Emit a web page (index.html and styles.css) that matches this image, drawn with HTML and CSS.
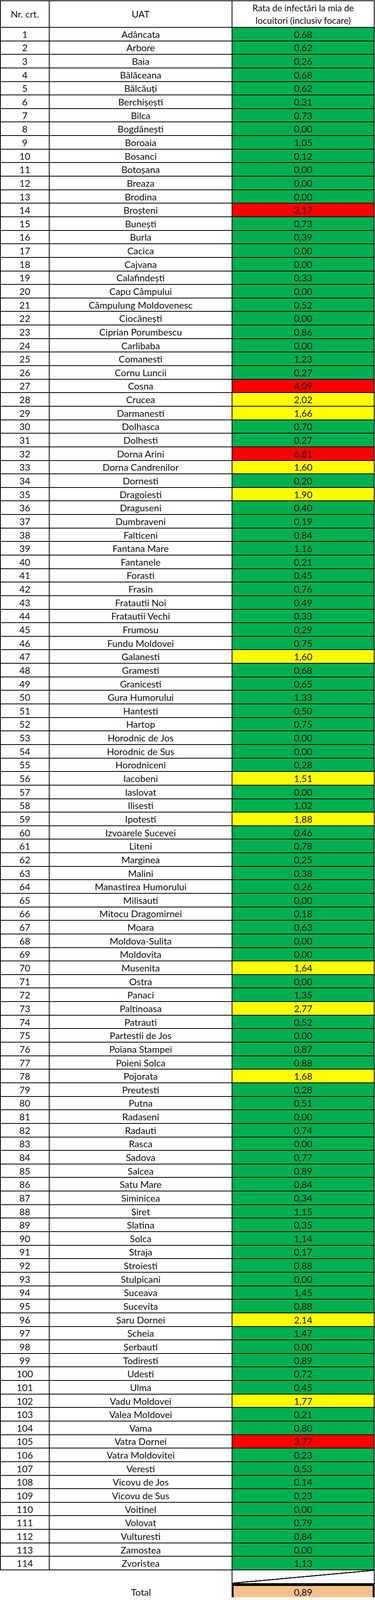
FILE: index.html
```html
<!DOCTYPE html>
<html lang="ro">
<head>
<meta charset="utf-8">
<title>Rata de infectări</title>
<link rel="stylesheet" href="styles.css">
</head>
<body>
<div class="sheet">
<div class="c n hd">Nr. crt.</div><div class="c hd">UAT</div><div class="c hd two">Rata de infectări la mia de<br>locuitori (inclusiv focare)</div>
<div class="c n">1</div><div class="c">Adâncata</div><div class="c g">0,68</div>
<div class="c n">2</div><div class="c">Arbore</div><div class="c g">0,62</div>
<div class="c n">3</div><div class="c">Baia</div><div class="c g">0,26</div>
<div class="c n">4</div><div class="c">Bălăceana</div><div class="c g">0,68</div>
<div class="c n">5</div><div class="c">Bălcăuți</div><div class="c g">0,62</div>
<div class="c n">6</div><div class="c">Berchișești</div><div class="c g">0,31</div>
<div class="c n">7</div><div class="c">Bilca</div><div class="c g">0,73</div>
<div class="c n">8</div><div class="c">Bogdănești</div><div class="c g">0,00</div>
<div class="c n">9</div><div class="c">Boroaia</div><div class="c g">1,05</div>
<div class="c n">10</div><div class="c">Bosanci</div><div class="c g">0,12</div>
<div class="c n">11</div><div class="c">Botoșana</div><div class="c g">0,00</div>
<div class="c n">12</div><div class="c">Breaza</div><div class="c g">0,00</div>
<div class="c n">13</div><div class="c">Brodina</div><div class="c g">0,00</div>
<div class="c n">14</div><div class="c">Broșteni</div><div class="c r">3,17</div>
<div class="c n">15</div><div class="c">Bunești</div><div class="c g">0,73</div>
<div class="c n">16</div><div class="c">Burla</div><div class="c g">0,39</div>
<div class="c n">17</div><div class="c">Cacica</div><div class="c g">0,00</div>
<div class="c n">18</div><div class="c">Cajvana</div><div class="c g">0,00</div>
<div class="c n">19</div><div class="c">Calafindești</div><div class="c g">0,33</div>
<div class="c n">20</div><div class="c">Capu Câmpului</div><div class="c g">0,00</div>
<div class="c n">21</div><div class="c">Câmpulung Moldovenesc</div><div class="c g">0,52</div>
<div class="c n">22</div><div class="c">Ciocănești</div><div class="c g">0,00</div>
<div class="c n">23</div><div class="c">Ciprian Porumbescu</div><div class="c g">0,86</div>
<div class="c n">24</div><div class="c">Carlibaba</div><div class="c g">0,00</div>
<div class="c n">25</div><div class="c">Comanesti</div><div class="c g">1,23</div>
<div class="c n">26</div><div class="c">Cornu Luncii</div><div class="c g">0,27</div>
<div class="c n">27</div><div class="c">Cosna</div><div class="c r">4,09</div>
<div class="c n">28</div><div class="c">Crucea</div><div class="c y">2,02</div>
<div class="c n">29</div><div class="c">Darmanesti</div><div class="c y">1,66</div>
<div class="c n">30</div><div class="c">Dolhasca</div><div class="c g">0,70</div>
<div class="c n">31</div><div class="c">Dolhesti</div><div class="c g">0,27</div>
<div class="c n">32</div><div class="c">Dorna Arini</div><div class="c r">6,81</div>
<div class="c n">33</div><div class="c">Dorna Candrenilor</div><div class="c y">1,60</div>
<div class="c n">34</div><div class="c">Dornesti</div><div class="c g">0,20</div>
<div class="c n">35</div><div class="c">Dragoiesti</div><div class="c y">1,90</div>
<div class="c n">36</div><div class="c">Draguseni</div><div class="c g">0,40</div>
<div class="c n">37</div><div class="c">Dumbraveni</div><div class="c g">0,19</div>
<div class="c n">38</div><div class="c">Falticeni</div><div class="c g">0,84</div>
<div class="c n">39</div><div class="c">Fantana Mare</div><div class="c g">1,16</div>
<div class="c n">40</div><div class="c">Fantanele</div><div class="c g">0,21</div>
<div class="c n">41</div><div class="c">Forasti</div><div class="c g">0,45</div>
<div class="c n">42</div><div class="c">Frasin</div><div class="c g">0,76</div>
<div class="c n">43</div><div class="c">Fratautii Noi</div><div class="c g">0,49</div>
<div class="c n">44</div><div class="c">Fratautii Vechi</div><div class="c g">0,33</div>
<div class="c n">45</div><div class="c">Frumosu</div><div class="c g">0,29</div>
<div class="c n">46</div><div class="c">Fundu Moldovei</div><div class="c g">0,75</div>
<div class="c n">47</div><div class="c">Galanesti</div><div class="c y">1,60</div>
<div class="c n">48</div><div class="c">Gramesti</div><div class="c g">0,68</div>
<div class="c n">49</div><div class="c">Granicesti</div><div class="c g">0,65</div>
<div class="c n">50</div><div class="c">Gura Humorului</div><div class="c g">1,33</div>
<div class="c n">51</div><div class="c">Hantesti</div><div class="c g">0,50</div>
<div class="c n">52</div><div class="c">Hartop</div><div class="c g">0,75</div>
<div class="c n">53</div><div class="c">Horodnic de Jos</div><div class="c g">0,00</div>
<div class="c n">54</div><div class="c">Horodnic de Sus</div><div class="c g">0,00</div>
<div class="c n">55</div><div class="c">Horodniceni</div><div class="c g">0,28</div>
<div class="c n">56</div><div class="c">Iacobeni</div><div class="c y">1,51</div>
<div class="c n">57</div><div class="c">Iaslovat</div><div class="c g">0,00</div>
<div class="c n">58</div><div class="c">Ilisesti</div><div class="c g">1,02</div>
<div class="c n">59</div><div class="c">Ipotesti</div><div class="c y">1,88</div>
<div class="c n">60</div><div class="c">Izvoarele Sucevei</div><div class="c g">0,46</div>
<div class="c n">61</div><div class="c">Liteni</div><div class="c g">0,78</div>
<div class="c n">62</div><div class="c">Marginea</div><div class="c g">0,25</div>
<div class="c n">63</div><div class="c">Malini</div><div class="c g">0,38</div>
<div class="c n">64</div><div class="c">Manastirea Humorului</div><div class="c g">0,26</div>
<div class="c n">65</div><div class="c">Milisauti</div><div class="c g">0,00</div>
<div class="c n">66</div><div class="c">Mitocu Dragomirnei</div><div class="c g">0,18</div>
<div class="c n">67</div><div class="c">Moara</div><div class="c g">0,63</div>
<div class="c n">68</div><div class="c">Moldova-Sulita</div><div class="c g">0,00</div>
<div class="c n">69</div><div class="c">Moldovita</div><div class="c g">0,00</div>
<div class="c n">70</div><div class="c">Musenita</div><div class="c y">1,64</div>
<div class="c n">71</div><div class="c">Ostra</div><div class="c g">0,00</div>
<div class="c n">72</div><div class="c">Panaci</div><div class="c g">1,35</div>
<div class="c n">73</div><div class="c">Paltinoasa</div><div class="c y">2,77</div>
<div class="c n">74</div><div class="c">Patrauti</div><div class="c g">0,52</div>
<div class="c n">75</div><div class="c">Partestii de Jos</div><div class="c g">0,00</div>
<div class="c n">76</div><div class="c">Poiana Stampei</div><div class="c g">0,87</div>
<div class="c n">77</div><div class="c">Poieni Solca</div><div class="c g">0,88</div>
<div class="c n">78</div><div class="c">Pojorata</div><div class="c y">1,68</div>
<div class="c n">79</div><div class="c">Preutesti</div><div class="c g">0,28</div>
<div class="c n">80</div><div class="c">Putna</div><div class="c g">0,51</div>
<div class="c n">81</div><div class="c">Radaseni</div><div class="c g">0,00</div>
<div class="c n">82</div><div class="c">Radauti</div><div class="c g">0,74</div>
<div class="c n">83</div><div class="c">Rasca</div><div class="c g">0,00</div>
<div class="c n">84</div><div class="c">Sadova</div><div class="c g">0,77</div>
<div class="c n">85</div><div class="c">Salcea</div><div class="c g">0,89</div>
<div class="c n">86</div><div class="c">Satu Mare</div><div class="c g">0,84</div>
<div class="c n">87</div><div class="c">Siminicea</div><div class="c g">0,34</div>
<div class="c n">88</div><div class="c">Siret</div><div class="c g">1,15</div>
<div class="c n">89</div><div class="c">Slatina</div><div class="c g">0,35</div>
<div class="c n">90</div><div class="c">Solca</div><div class="c g">1,14</div>
<div class="c n">91</div><div class="c">Straja</div><div class="c g">0,17</div>
<div class="c n">92</div><div class="c">Stroiesti</div><div class="c g">0,88</div>
<div class="c n">93</div><div class="c">Stulpicani</div><div class="c g">0,00</div>
<div class="c n">94</div><div class="c">Suceava</div><div class="c g">1,45</div>
<div class="c n">95</div><div class="c">Sucevita</div><div class="c g">0,88</div>
<div class="c n">96</div><div class="c">Șaru Dornei</div><div class="c y">2,14</div>
<div class="c n">97</div><div class="c">Șcheia</div><div class="c g">1,47</div>
<div class="c n">98</div><div class="c">Șerbauti</div><div class="c g">0,00</div>
<div class="c n">99</div><div class="c">Todiresti</div><div class="c g">0,89</div>
<div class="c n">100</div><div class="c">Udesti</div><div class="c g">0,72</div>
<div class="c n">101</div><div class="c">Ulma</div><div class="c g">0,45</div>
<div class="c n">102</div><div class="c">Vadu Moldovei</div><div class="c y">1,77</div>
<div class="c n">103</div><div class="c">Valea Moldovei</div><div class="c g">0,21</div>
<div class="c n">104</div><div class="c">Vama</div><div class="c g">0,80</div>
<div class="c n">105</div><div class="c">Vatra Dornei</div><div class="c r">3,77</div>
<div class="c n">106</div><div class="c">Vatra Moldovitei</div><div class="c g">0,23</div>
<div class="c n">107</div><div class="c">Veresti</div><div class="c g">0,53</div>
<div class="c n">108</div><div class="c">Vicovu de Jos</div><div class="c g">0,14</div>
<div class="c n">109</div><div class="c">Vicovu de Sus</div><div class="c g">0,23</div>
<div class="c n">110</div><div class="c">Voitinel</div><div class="c g">0,00</div>
<div class="c n">111</div><div class="c">Volovat</div><div class="c g">0,79</div>
<div class="c n">112</div><div class="c">Vulturesti</div><div class="c g">0,84</div>
<div class="c n">113</div><div class="c">Zamostea</div><div class="c g">0,00</div>
<div class="c n">114</div><div class="c">Zvoristea</div><div class="c g">1,13</div>
<div class="blank"></div><div class="blank edge"></div><div class="c diag"></div>
<div class="blank totrow"></div><div class="blank totrow label">Total</div><div class="sum totrow">0,89</div>
</div>
</body>
</html>
```
FILE: styles.css
```css
html, body {
  margin: 0;
  padding: 0;
  background: #ffffff;
}

body {
  padding-top: 1px;
  font-family: Lato, "Open Sans", "Liberation Sans", sans-serif;
  color: #111111;
}

.sheet {
  display: grid;
  grid-template-columns: 127px 468px 364px;
  grid-template-rows: 70px;
  grid-auto-rows: 34.644px;
  width: 959px;
  font-size: 24px;
  line-height: 26px;
}

.c {
  box-sizing: border-box;
  display: flex;
  align-items: center;
  justify-content: center;
  text-align: center;
  border-right: 2px solid #000000;
  border-bottom: 2px solid #000000;
  padding-top: 1px;
}

.c.n {
  border-left: 2px solid #000000;
}

.c.hd {
  border-top: 2px solid #000000;
  line-height: 32px;
  padding-top: 0;
}

.c.two {
  flex-direction: column;
  font-size: 23px;
}

.g { background: #00b050; }
.y { background: #ffff00; }
.r { background: #ff0000; }

.blank {
  box-sizing: border-box;
}

.blank.edge {
  border-right: 2px solid #000000;
}

.c.diag {
  background: linear-gradient(to bottom right,
    transparent calc(50% - 1.5px),
    #000000 calc(50% - 1px),
    #000000 calc(50% + 1px),
    transparent calc(50% + 1.5px));
}

.totrow {
  height: 41px;
}

.label {
  display: flex;
  align-items: center;
  justify-content: center;
  padding-top: 2px;
}

.sum {
  box-sizing: border-box;
  margin-left: -2px;
  display: flex;
  align-items: center;
  justify-content: center;
  background: #f8bf8e;
  border: 5px solid #000000;
  padding-top: 1px;
}
```
